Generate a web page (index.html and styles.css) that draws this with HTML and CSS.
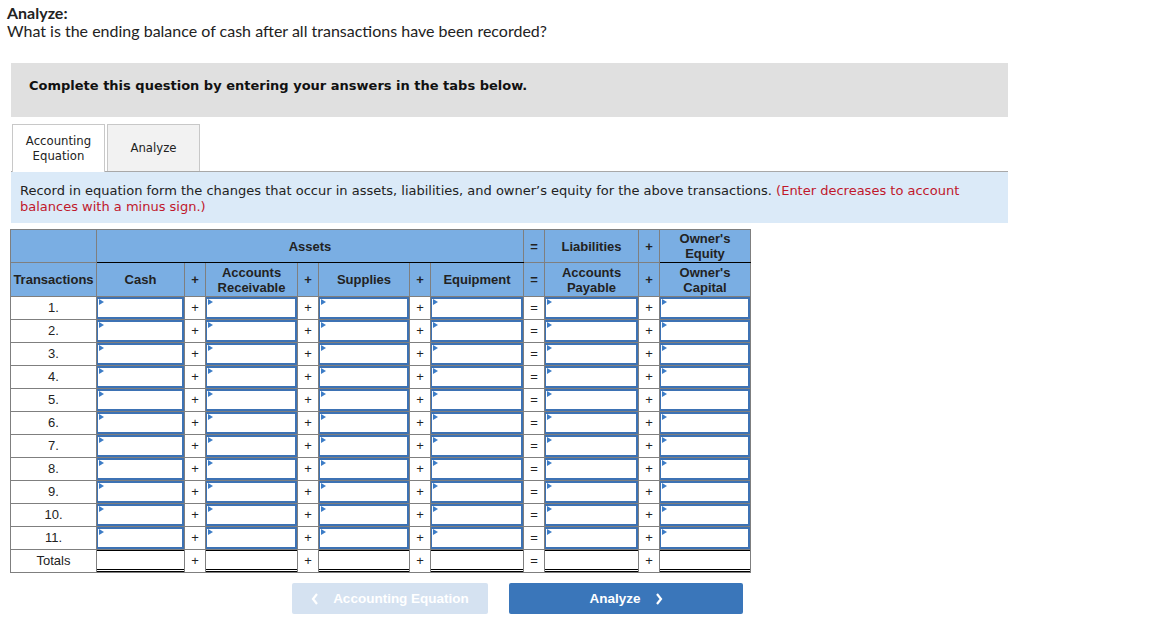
FILE: index.html
```html
<!DOCTYPE html>
<html lang="en">
<head>
    <meta charset="UTF-8">
    <title>Analyze</title>
    <link rel="stylesheet" href="styles.css">
</head>
<body>
    <div class="question">
        <div class="q-label">Analyze:</div>
        <div class="q-text">What is the ending balance of cash after all transactions have been recorded?</div>
    </div>

    <div class="wrap">
        <div class="notice">Complete this question by entering your answers in the tabs below.</div>

        <div class="tabs">
            <div class="tab active">Accounting<br>Equation</div>
            <div class="tab">Analyze</div>
        </div>

        <div class="instructions">
            Record in equation form the changes that occur in assets, liabilities, and owner’s equity for the above transactions. <span class="red">(Enter decreases to account balances with a minus sign.)</span>
        </div>

        <table class="eq">
            <colgroup>
                <col style="width:86px"><col style="width:88px"><col style="width:21px"><col style="width:92px">
                <col style="width:21px"><col style="width:91px"><col style="width:21px"><col style="width:93px">
                <col style="width:21px"><col style="width:94px"><col style="width:21px"><col style="width:91px">
            </colgroup>
            <thead>
                <tr class="h1">
                    <th></th>
                    <th colspan="7" class="group">Assets</th>
                    <th>=</th>
                    <th>Liabilities</th>
                    <th>+</th>
                    <th class="group">Owner's<br>Equity</th>
                </tr>
                <tr class="h2">
                    <th>Transactions</th>
                    <th>Cash</th>
                    <th>+</th>
                    <th>Accounts<br>Receivable</th>
                    <th>+</th>
                    <th>Supplies</th>
                    <th>+</th>
                    <th>Equipment</th>
                    <th>=</th>
                    <th>Accounts<br>Payable</th>
                    <th>+</th>
                    <th>Owner's<br>Capital</th>
                </tr>
            </thead>
            <tbody>
                <tr><td>1.</td><td class="in"><div class="box"></div></td><td>+</td><td class="in"><div class="box"></div></td><td>+</td><td class="in"><div class="box"></div></td><td>+</td><td class="in"><div class="box"></div></td><td>=</td><td class="in"><div class="box"></div></td><td>+</td><td class="in"><div class="box"></div></td></tr>
                <tr><td>2.</td><td class="in"><div class="box"></div></td><td>+</td><td class="in"><div class="box"></div></td><td>+</td><td class="in"><div class="box"></div></td><td>+</td><td class="in"><div class="box"></div></td><td>=</td><td class="in"><div class="box"></div></td><td>+</td><td class="in"><div class="box"></div></td></tr>
                <tr><td>3.</td><td class="in"><div class="box"></div></td><td>+</td><td class="in"><div class="box"></div></td><td>+</td><td class="in"><div class="box"></div></td><td>+</td><td class="in"><div class="box"></div></td><td>=</td><td class="in"><div class="box"></div></td><td>+</td><td class="in"><div class="box"></div></td></tr>
                <tr><td>4.</td><td class="in"><div class="box"></div></td><td>+</td><td class="in"><div class="box"></div></td><td>+</td><td class="in"><div class="box"></div></td><td>+</td><td class="in"><div class="box"></div></td><td>=</td><td class="in"><div class="box"></div></td><td>+</td><td class="in"><div class="box"></div></td></tr>
                <tr><td>5.</td><td class="in"><div class="box"></div></td><td>+</td><td class="in"><div class="box"></div></td><td>+</td><td class="in"><div class="box"></div></td><td>+</td><td class="in"><div class="box"></div></td><td>=</td><td class="in"><div class="box"></div></td><td>+</td><td class="in"><div class="box"></div></td></tr>
                <tr><td>6.</td><td class="in"><div class="box"></div></td><td>+</td><td class="in"><div class="box"></div></td><td>+</td><td class="in"><div class="box"></div></td><td>+</td><td class="in"><div class="box"></div></td><td>=</td><td class="in"><div class="box"></div></td><td>+</td><td class="in"><div class="box"></div></td></tr>
                <tr><td>7.</td><td class="in"><div class="box"></div></td><td>+</td><td class="in"><div class="box"></div></td><td>+</td><td class="in"><div class="box"></div></td><td>+</td><td class="in"><div class="box"></div></td><td>=</td><td class="in"><div class="box"></div></td><td>+</td><td class="in"><div class="box"></div></td></tr>
                <tr><td>8.</td><td class="in"><div class="box"></div></td><td>+</td><td class="in"><div class="box"></div></td><td>+</td><td class="in"><div class="box"></div></td><td>+</td><td class="in"><div class="box"></div></td><td>=</td><td class="in"><div class="box"></div></td><td>+</td><td class="in"><div class="box"></div></td></tr>
                <tr><td>9.</td><td class="in"><div class="box"></div></td><td>+</td><td class="in"><div class="box"></div></td><td>+</td><td class="in"><div class="box"></div></td><td>+</td><td class="in"><div class="box"></div></td><td>=</td><td class="in"><div class="box"></div></td><td>+</td><td class="in"><div class="box"></div></td></tr>
                <tr><td>10.</td><td class="in"><div class="box"></div></td><td>+</td><td class="in"><div class="box"></div></td><td>+</td><td class="in"><div class="box"></div></td><td>+</td><td class="in"><div class="box"></div></td><td>=</td><td class="in"><div class="box"></div></td><td>+</td><td class="in"><div class="box"></div></td></tr>
                <tr><td>11.</td><td class="in"><div class="box"></div></td><td>+</td><td class="in"><div class="box"></div></td><td>+</td><td class="in"><div class="box"></div></td><td>+</td><td class="in"><div class="box"></div></td><td>=</td><td class="in"><div class="box"></div></td><td>+</td><td class="in"><div class="box"></div></td></tr>
                <tr class="totals"><td>Totals</td><td class="in"><div class="total"></div></td><td>+</td><td class="in"><div class="total"></div></td><td>+</td><td class="in"><div class="total"></div></td><td>+</td><td class="in"><div class="total"></div></td><td>=</td><td class="in"><div class="total"></div></td><td>+</td><td class="in"><div class="total"></div></td></tr>
            </tbody>
        </table>

        <div class="nav">
            <button class="btn prev" disabled>
                <svg class="chev" width="8" height="12" viewBox="0 0 8 12"><polyline points="6,1 2,6 6,11" fill="none" stroke="#fff" stroke-width="2.2"/></svg>
                Accounting Equation
            </button>
            <button class="btn next">
                Analyze
                <svg class="chev" width="8" height="12" viewBox="0 0 8 12"><polyline points="2,1 6,6 2,11" fill="none" stroke="#fff" stroke-width="2.2"/></svg>
            </button>
        </div>
    </div>
</body>
</html>
```

FILE: styles.css
```css
body {
    margin: 0;
    padding: 0;
    background: #fff;
    color: #222;
}

.question {
    padding: 4px 0 0 7px;
    font-family: "Lato", sans-serif;
    font-size: 16px;
    line-height: 18px;
}

.q-label {
    font-weight: bold;
}

.wrap {
    width: 997px;
    margin: 23px 0 0 11px;
}

.notice {
    background-color: #e0e0e0;
    height: 54px;
    box-sizing: border-box;
    padding: 15px 0 0 18px;
    font-family: "DejaVu Sans", Verdana, sans-serif;
    font-weight: bold;
    font-size: 13px;
    color: #111;
}

.tabs {
    display: flex;
    gap: 2px;
    margin-top: 7px;
    padding-left: 1px;
}

.tab {
    width: 91px;
    height: 46px;
    border: 1px solid #c8c8c8;
    border-bottom: none;
    background-color: #f2f2f2;
    display: flex;
    align-items: center;
    justify-content: center;
    text-align: center;
    font-family: "DejaVu Sans", Verdana, sans-serif;
    font-size: 11.7px;
    line-height: 15px;
    color: #222;
}

.tab.active {
    background-color: #fff;
    height: 47px;
    margin-bottom: -1px;
    position: relative;
}

.instructions {
    background-color: #dbeaf8;
    border-top: 1px solid #a8a8a8;
    height: 52px;
    box-sizing: border-box;
    padding: 11px 9px 0 9px;
    font-family: "DejaVu Sans", Verdana, sans-serif;
    font-size: 13px;
    line-height: 16px;
    color: #222;
}

.red {
    color: #c0182c;
}

/* equation table */
.eq {
    border-collapse: collapse;
    table-layout: fixed;
    width: 740px;
    margin: 6px 0 0 -1px;
    font-family: "Liberation Sans", Arial, sans-serif;
    font-size: 13px;
    color: #222;
}

.eq th, .eq td {
    border: 1px solid #7f7f7f;
    padding: 0;
    text-align: center;
}

.eq th {
    background-color: #7aaee3;
    font-weight: bold;
    line-height: 15px;
    color: #222;
}

.eq .h1 th {
    height: 32px;
}

.eq .h2 th {
    height: 33px;
}

.eq th.group {
    border-bottom: 1px solid #000;
}

.eq td {
    height: 22px;
    line-height: 22px;
}

.box {
    position: relative;
    height: 18px;
    border: 2px solid #3d72b4;
    border-left-width: 1px;
    background: #fff;
}

.box::before {
    content: "";
    position: absolute;
    top: 0;
    left: 1px;
    border-top: 3px solid transparent;
    border-bottom: 3px solid transparent;
    border-left: 5px solid #3c7cc6;
}

.total {
    height: 18px;
    border-top: 1px solid #000;
    border-bottom: 3px double #000;
}

.nav {
    display: flex;
    gap: 21px;
    margin: 10px 0 0 281px;
}

.btn {
    height: 31px;
    border: none;
    border-radius: 2px;
    display: flex;
    align-items: center;
    justify-content: center;
    font-family: "Liberation Sans", Arial, sans-serif;
    font-weight: bold;
    font-size: 13.5px;
    color: #fff;
    cursor: pointer;
}

.btn.prev {
    width: 196px;
    background-color: #d5e2f1;
}

.btn.prev .chev {
    margin-right: 14px;
}

.btn.next {
    width: 234px;
    background-color: #3a76ba;
}

.btn.next .chev {
    margin-left: 14px;
}
```
